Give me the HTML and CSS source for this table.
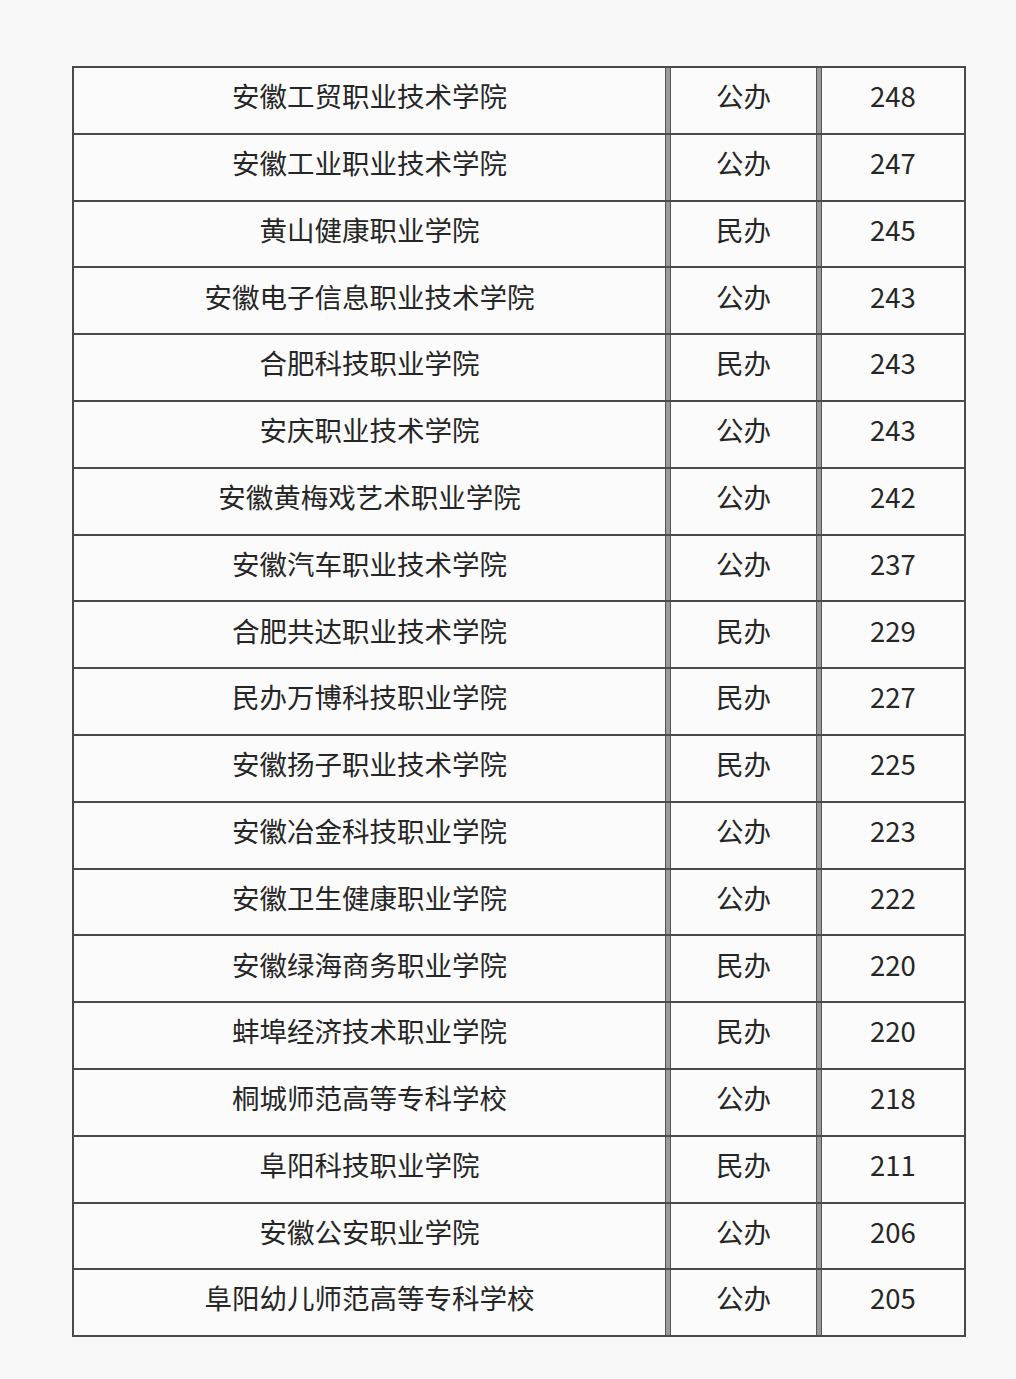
FILE: index.html
```html
<!DOCTYPE html>
<html lang="zh">
<head>
<meta charset="utf-8">
<link rel="stylesheet" href="styles.css">
</head>
<body>
<div class="table">
  <div class="row"><div class="cell name">安徽工贸职业技术学院</div><div class="cell type">公办</div><div class="cell score">248</div></div>
  <div class="row"><div class="cell name">安徽工业职业技术学院</div><div class="cell type">公办</div><div class="cell score">247</div></div>
  <div class="row"><div class="cell name">黄山健康职业学院</div><div class="cell type">民办</div><div class="cell score">245</div></div>
  <div class="row"><div class="cell name">安徽电子信息职业技术学院</div><div class="cell type">公办</div><div class="cell score">243</div></div>
  <div class="row"><div class="cell name">合肥科技职业学院</div><div class="cell type">民办</div><div class="cell score">243</div></div>
  <div class="row"><div class="cell name">安庆职业技术学院</div><div class="cell type">公办</div><div class="cell score">243</div></div>
  <div class="row"><div class="cell name">安徽黄梅戏艺术职业学院</div><div class="cell type">公办</div><div class="cell score">242</div></div>
  <div class="row"><div class="cell name">安徽汽车职业技术学院</div><div class="cell type">公办</div><div class="cell score">237</div></div>
  <div class="row"><div class="cell name">合肥共达职业技术学院</div><div class="cell type">民办</div><div class="cell score">229</div></div>
  <div class="row"><div class="cell name">民办万博科技职业学院</div><div class="cell type">民办</div><div class="cell score">227</div></div>
  <div class="row"><div class="cell name">安徽扬子职业技术学院</div><div class="cell type">民办</div><div class="cell score">225</div></div>
  <div class="row"><div class="cell name">安徽冶金科技职业学院</div><div class="cell type">公办</div><div class="cell score">223</div></div>
  <div class="row"><div class="cell name">安徽卫生健康职业学院</div><div class="cell type">公办</div><div class="cell score">222</div></div>
  <div class="row"><div class="cell name">安徽绿海商务职业学院</div><div class="cell type">民办</div><div class="cell score">220</div></div>
  <div class="row"><div class="cell name">蚌埠经济技术职业学院</div><div class="cell type">民办</div><div class="cell score">220</div></div>
  <div class="row"><div class="cell name">桐城师范高等专科学校</div><div class="cell type">公办</div><div class="cell score">218</div></div>
  <div class="row"><div class="cell name">阜阳科技职业学院</div><div class="cell type">民办</div><div class="cell score">211</div></div>
  <div class="row"><div class="cell name">安徽公安职业学院</div><div class="cell type">公办</div><div class="cell score">206</div></div>
  <div class="row"><div class="cell name">阜阳幼儿师范高等专科学校</div><div class="cell type">公办</div><div class="cell score">205</div></div>
</div>
</body>
</html>
```

FILE: styles.css
```css
html, body {
  margin: 0;
  padding: 0;
  background: #f8f8f8;
}
body {
  padding: 66px 0 0 72px;
  font-family: "Noto Sans CJK SC", "Noto Sans", sans-serif;
  color: #262626;
}
.table {
  width: 890px;
  border: 2px solid #4a4a4a;
  border-bottom-width: 0;
  background: #fbfbfb;
}
.row {
  display: grid;
  grid-template-columns: 592px 147px 143px;
  column-gap: 4px;
  height: 64.8px;
  border-bottom: 2px solid #4a4a4a;
  background: #9a9a9a;
}
.cell {
  display: flex;
  align-items: center;
  justify-content: center;
  background: #fbfbfb;
  font-size: 27.5px;
  line-height: 1;
  padding-bottom: 9px;
}
.name {
  border-right: 1px solid #555;
}
.type {
  border-left: 1px solid #555;
  border-right: 1px solid #555;
}
.score {
  border-left: 1px solid #555;
}
```
